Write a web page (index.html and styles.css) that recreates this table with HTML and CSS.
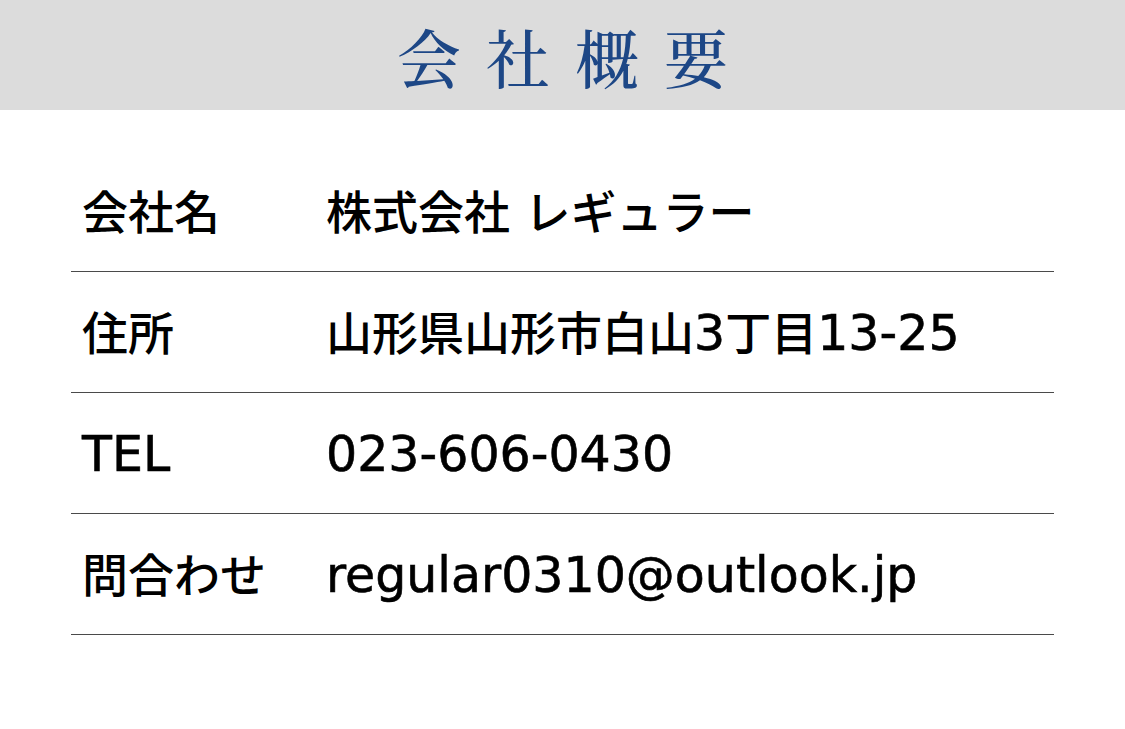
FILE: index.html
```html
<!DOCTYPE html>
<html lang="ja">
<head>
<meta charset="utf-8">
<title>会社概要</title>
<link rel="stylesheet" href="styles.css">
</head>
<body>
<header class="page-head">
  <h1 class="title">会社概要</h1>
</header>
<main class="content">
  <dl class="info">
    <div class="row"><dt class="label">会社名</dt><dd class="value">株式会社 レギュラー</dd></div>
    <div class="row"><dt class="label">住所</dt><dd class="value">山形県山形市白山<span class="latin">3</span>丁目<span class="latin">13-25</span></dd></div>
    <div class="row"><dt class="label"><span class="latin">TEL</span></dt><dd class="value"><span class="latin">023-606-0430</span></dd></div>
    <div class="row"><dt class="label">問合わせ</dt><dd class="value"><span class="latin">regular0310@outlook.jp</span></dd></div>
  </dl>
</main>
</body>
</html>
```

FILE: styles.css
```css
html, body {
  margin: 0;
  padding: 0;
  background: #ffffff;
}
body {
  width: 1125px;
  height: 729px;
  overflow: hidden;
  font-family: "DejaVu Sans", "Noto Sans CJK JP", sans-serif;
  color: #000;
}
.page-head {
  height: 110px;
  background: #dcdcdc;
  display: flex;
  align-items: center;
  justify-content: center;
}
.title {
  margin: 0;
  font-family: "Noto Serif CJK JP", "Noto Serif JP", serif;
  font-weight: 500;
  font-size: 64px;
  line-height: 1;
  letter-spacing: 25px;
  padding-left: 25px;
  color: #1d4786;
}
.content {
  padding: 41px 71px 0 71px;
}
.info {
  margin: 0;
  width: 983px;
}
.row {
  display: flex;
  align-items: center;
  height: 121px;
  border-bottom: 1px solid #4a4a4a;
  padding-top: 3px;
  box-sizing: border-box;
}
.label {
  width: 255px;
  padding-left: 11px;
  box-sizing: border-box;
  font-size: 46px;
  font-weight: 500;
  line-height: 60px;
  margin: 0;
}
.value {
  margin: 0;
  font-size: 46px;
  font-weight: 500;
  line-height: 60px;
}
.latin {
  font-family: "DejaVu Sans", sans-serif;
  font-size: 49px;
  -webkit-text-stroke: 0.6px #000;
}
```
